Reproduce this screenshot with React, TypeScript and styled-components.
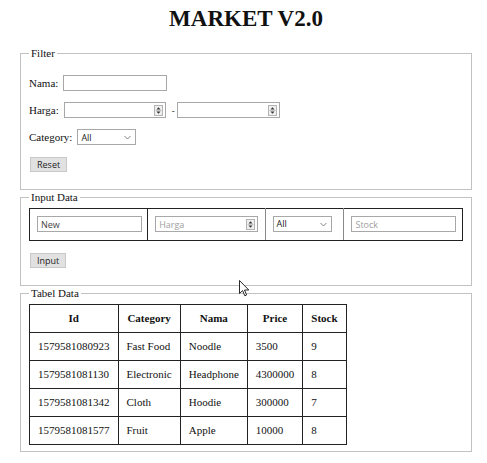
import React from 'react';
import styled, { createGlobalStyle } from 'styled-components';

const GlobalStyle = createGlobalStyle`
  html, body {
    margin: 0;
    padding: 0;
    background: #fff;
  }
  body {
    font-family: "Liberation Serif", "Times New Roman", serif;
    font-size: 11px;
    color: #111;
  }
`;

const serif = `"Liberation Serif", "Times New Roman", serif`;
const sans = `"Open Sans", "Liberation Sans", sans-serif`;

const Page = styled.div`
  position: relative;
  margin: 0 15px 0 20px;
  padding-bottom: 12px;
  font-family: ${serif};
`;

const Title = styled.h1`
  margin: 6px 0 15px;
  font-family: ${serif};
  font-size: 23px;
  line-height: 26px;
  font-weight: bold;
  text-align: center;
  color: #111;
`;

const Fieldset = styled.fieldset`
  margin: 0 0 1px;
  padding: 4px 8px 6px;
  border: 1px solid #c2c2c2;
  min-width: 0;
  font-family: ${serif};
  font-size: 11px;
`;

const Legend = styled.legend`
  padding: 0 2px;
  font-family: ${serif};
  font-size: 11px;
  line-height: 13px;
  color: #111;
`;

const Row = styled.div`
  display: flex;
  align-items: center;
  gap: 3px;
  margin: 11px 0;
  height: 16px;
  font-family: ${serif};
  font-size: 11px;
`;

const Label = styled.span`
  margin-right: 2px;
  font-family: ${serif};
  font-size: 11px;
  color: #111;
`;

const Dash = styled.span`
  margin-left: 3px;
  margin-right: -1px;
  font-family: ${sans};
  font-size: 9px;
`;

const TextInput = styled.input<{ $w: number }>`
  box-sizing: border-box;
  display: block;
  width: ${p => p.$w}px;
  height: 16px;
  margin: 0;
  padding: 0 3px;
  border: 1px solid #a8a8a8;
  font-family: ${sans};
  font-size: 9px;
  color: #444;
  outline: none;
  &::placeholder {
    color: #a0a0a0;
  }
`;

const NumberBox = styled.div<{ $w: number }>`
  box-sizing: border-box;
  display: flex;
  align-items: center;
  width: ${p => p.$w}px;
  height: 16px;
  border: 1px solid #a8a8a8;
  background: #fff;
`;

const BareInput = styled.input`
  flex: 1;
  min-width: 0;
  height: 100%;
  border: 0;
  margin: 0;
  padding: 0 3px;
  font-family: ${sans};
  font-size: 9px;
  outline: none;
  &::placeholder {
    color: #a0a0a0;
  }
`;

const Spin = styled.span`
  box-sizing: border-box;
  display: flex;
  width: 9px;
  height: 11px;
  margin-right: 2px;
  border: 1px solid #b4b4b4;
  background: #efefef;
`;

const SelectBox = styled.div`
  box-sizing: border-box;
  display: flex;
  align-items: center;
  justify-content: space-between;
  width: 59px;
  height: 16px;
  padding: 0 4px 0 3px;
  border: 1px solid #a8a8a8;
  background: #fff;
  font-family: ${sans};
  font-size: 9px;
  color: #222;
`;

const Button = styled.button`
  box-sizing: border-box;
  height: 15px;
  margin: 0 0 0 1px;
  padding: 0 6px;
  border: 1px solid #c8c8c8;
  background: #e1e1e1;
  font-family: ${sans};
  font-size: 9px;
  line-height: 13px;
  color: #222;
`;

const InputTable = styled.table`
  width: 100%;
  border-collapse: collapse;
  border: 1px solid #222;
  table-layout: fixed;
`;

const InputCell = styled.td<{ $w: string; $light?: boolean }>`
  width: ${p => p.$w};
  height: 16px;
  padding: 7px 7px 8px;
  border: 1px solid ${p => (p.$light ? '#8a8a8a' : '#222')};
  border-top-color: #222;
  border-bottom-color: #222;
  vertical-align: top;
  line-height: 16px;
`;

const DataTable = styled.table`
  border-collapse: collapse;
  border: 1px solid #222;
  font-family: ${serif};
  font-size: 11px;
`;

const Th = styled.th`
  padding: 7px 8px;
  border: 1px solid #222;
  font-weight: bold;
  text-align: center;
  line-height: 13px;
  white-space: nowrap;
`;

const Td = styled.td`
  padding: 7px 8px;
  border: 1px solid #222;
  text-align: left;
  line-height: 13px;
  white-space: nowrap;
`;

const Cursor = styled.svg`
  position: absolute;
  left: 219px;
  top: 274px;
  pointer-events: none;
`;

const SpinIcon = () => (
  <Spin>
    <svg width="7" height="9" viewBox="0 0 7 9">
      <path d="M3.5 1.2 L5.5 3.4 H1.5 Z" fill="#333" />
      <line x1="0.5" y1="4.5" x2="6.5" y2="4.5" stroke="#bbb" strokeWidth="0.8" />
      <path d="M3.5 7.8 L5.5 5.6 H1.5 Z" fill="#333" />
    </svg>
  </Spin>
);

const NumberField = ({ w, placeholder }: { w: number; placeholder?: string }) => (
  <NumberBox $w={w}>
    <BareInput placeholder={placeholder} />
    <SpinIcon />
  </NumberBox>
);

const Select = () => (
  <SelectBox>
    <span>All</span>
    <svg width="7" height="5" viewBox="0 0 7 5">
      <path d="M0.5 1 L3.5 4 L6.5 1" fill="none" stroke="#777" strokeWidth="0.9" />
    </svg>
  </SelectBox>
);

const rows = [
  { id: '1579581080923', category: 'Fast Food', nama: 'Noodle', price: '3500', stock: '9' },
  { id: '1579581081130', category: 'Electronic', nama: 'Headphone', price: '4300000', stock: '8' },
  { id: '1579581081342', category: 'Cloth', nama: 'Hoodie', price: '300000', stock: '7' },
  { id: '1579581081577', category: 'Fruit', nama: 'Apple', price: '10000', stock: '8' },
];

const App = () => {
  return (
    <Page>
      <GlobalStyle />
      <Title>MARKET V2.0</Title>

      <Fieldset>
        <Legend>Filter</Legend>
        <Row>
          <Label>Nama:</Label>
          <TextInput $w={104} />
        </Row>
        <Row>
          <Label>Harga:</Label>
          <NumberField w={102} />
          <Dash>-</Dash>
          <NumberField w={103} />
        </Row>
        <Row>
          <Label>Category:</Label>
          <Select />
        </Row>
        <Row>
          <Button>Reset</Button>
        </Row>
      </Fieldset>

      <Fieldset>
        <Legend>Input Data</Legend>
        <InputTable>
          <tbody>
            <tr>
              <InputCell $w="27.6%">
                <TextInput $w={105} defaultValue="New" />
              </InputCell>
              <InputCell $w="27.4%" $light>
                <NumberField w={103} placeholder="Harga" />
              </InputCell>
              <InputCell $w="17.3%" $light>
                <Select />
              </InputCell>
              <InputCell $w="27.7%">
                <TextInput $w={105} placeholder="Stock" />
              </InputCell>
            </tr>
          </tbody>
        </InputTable>
        <Row>
          <Button>Input</Button>
        </Row>
      </Fieldset>

      <Fieldset>
        <Legend>Tabel Data</Legend>
        <DataTable>
          <thead>
            <tr>
              <Th>Id</Th>
              <Th>Category</Th>
              <Th>Nama</Th>
              <Th>Price</Th>
              <Th>Stock</Th>
            </tr>
          </thead>
          <tbody>
            {rows.map(r => (
              <tr key={r.id}>
                <Td>{r.id}</Td>
                <Td>{r.category}</Td>
                <Td>{r.nama}</Td>
                <Td>{r.price}</Td>
                <Td>{r.stock}</Td>
              </tr>
            ))}
          </tbody>
        </DataTable>
      </Fieldset>

      <Cursor width="11" height="17" viewBox="0 0 11 17">
        <path d="M0.5 0.5 V13.5 L3.6 10.6 L5.8 15.8 L7.6 15 L5.5 10 H9.8 Z" fill="#fff" stroke="#111" strokeWidth="0.9" strokeLinejoin="round" />
      </Cursor>
    </Page>
  );
};

export default App;
